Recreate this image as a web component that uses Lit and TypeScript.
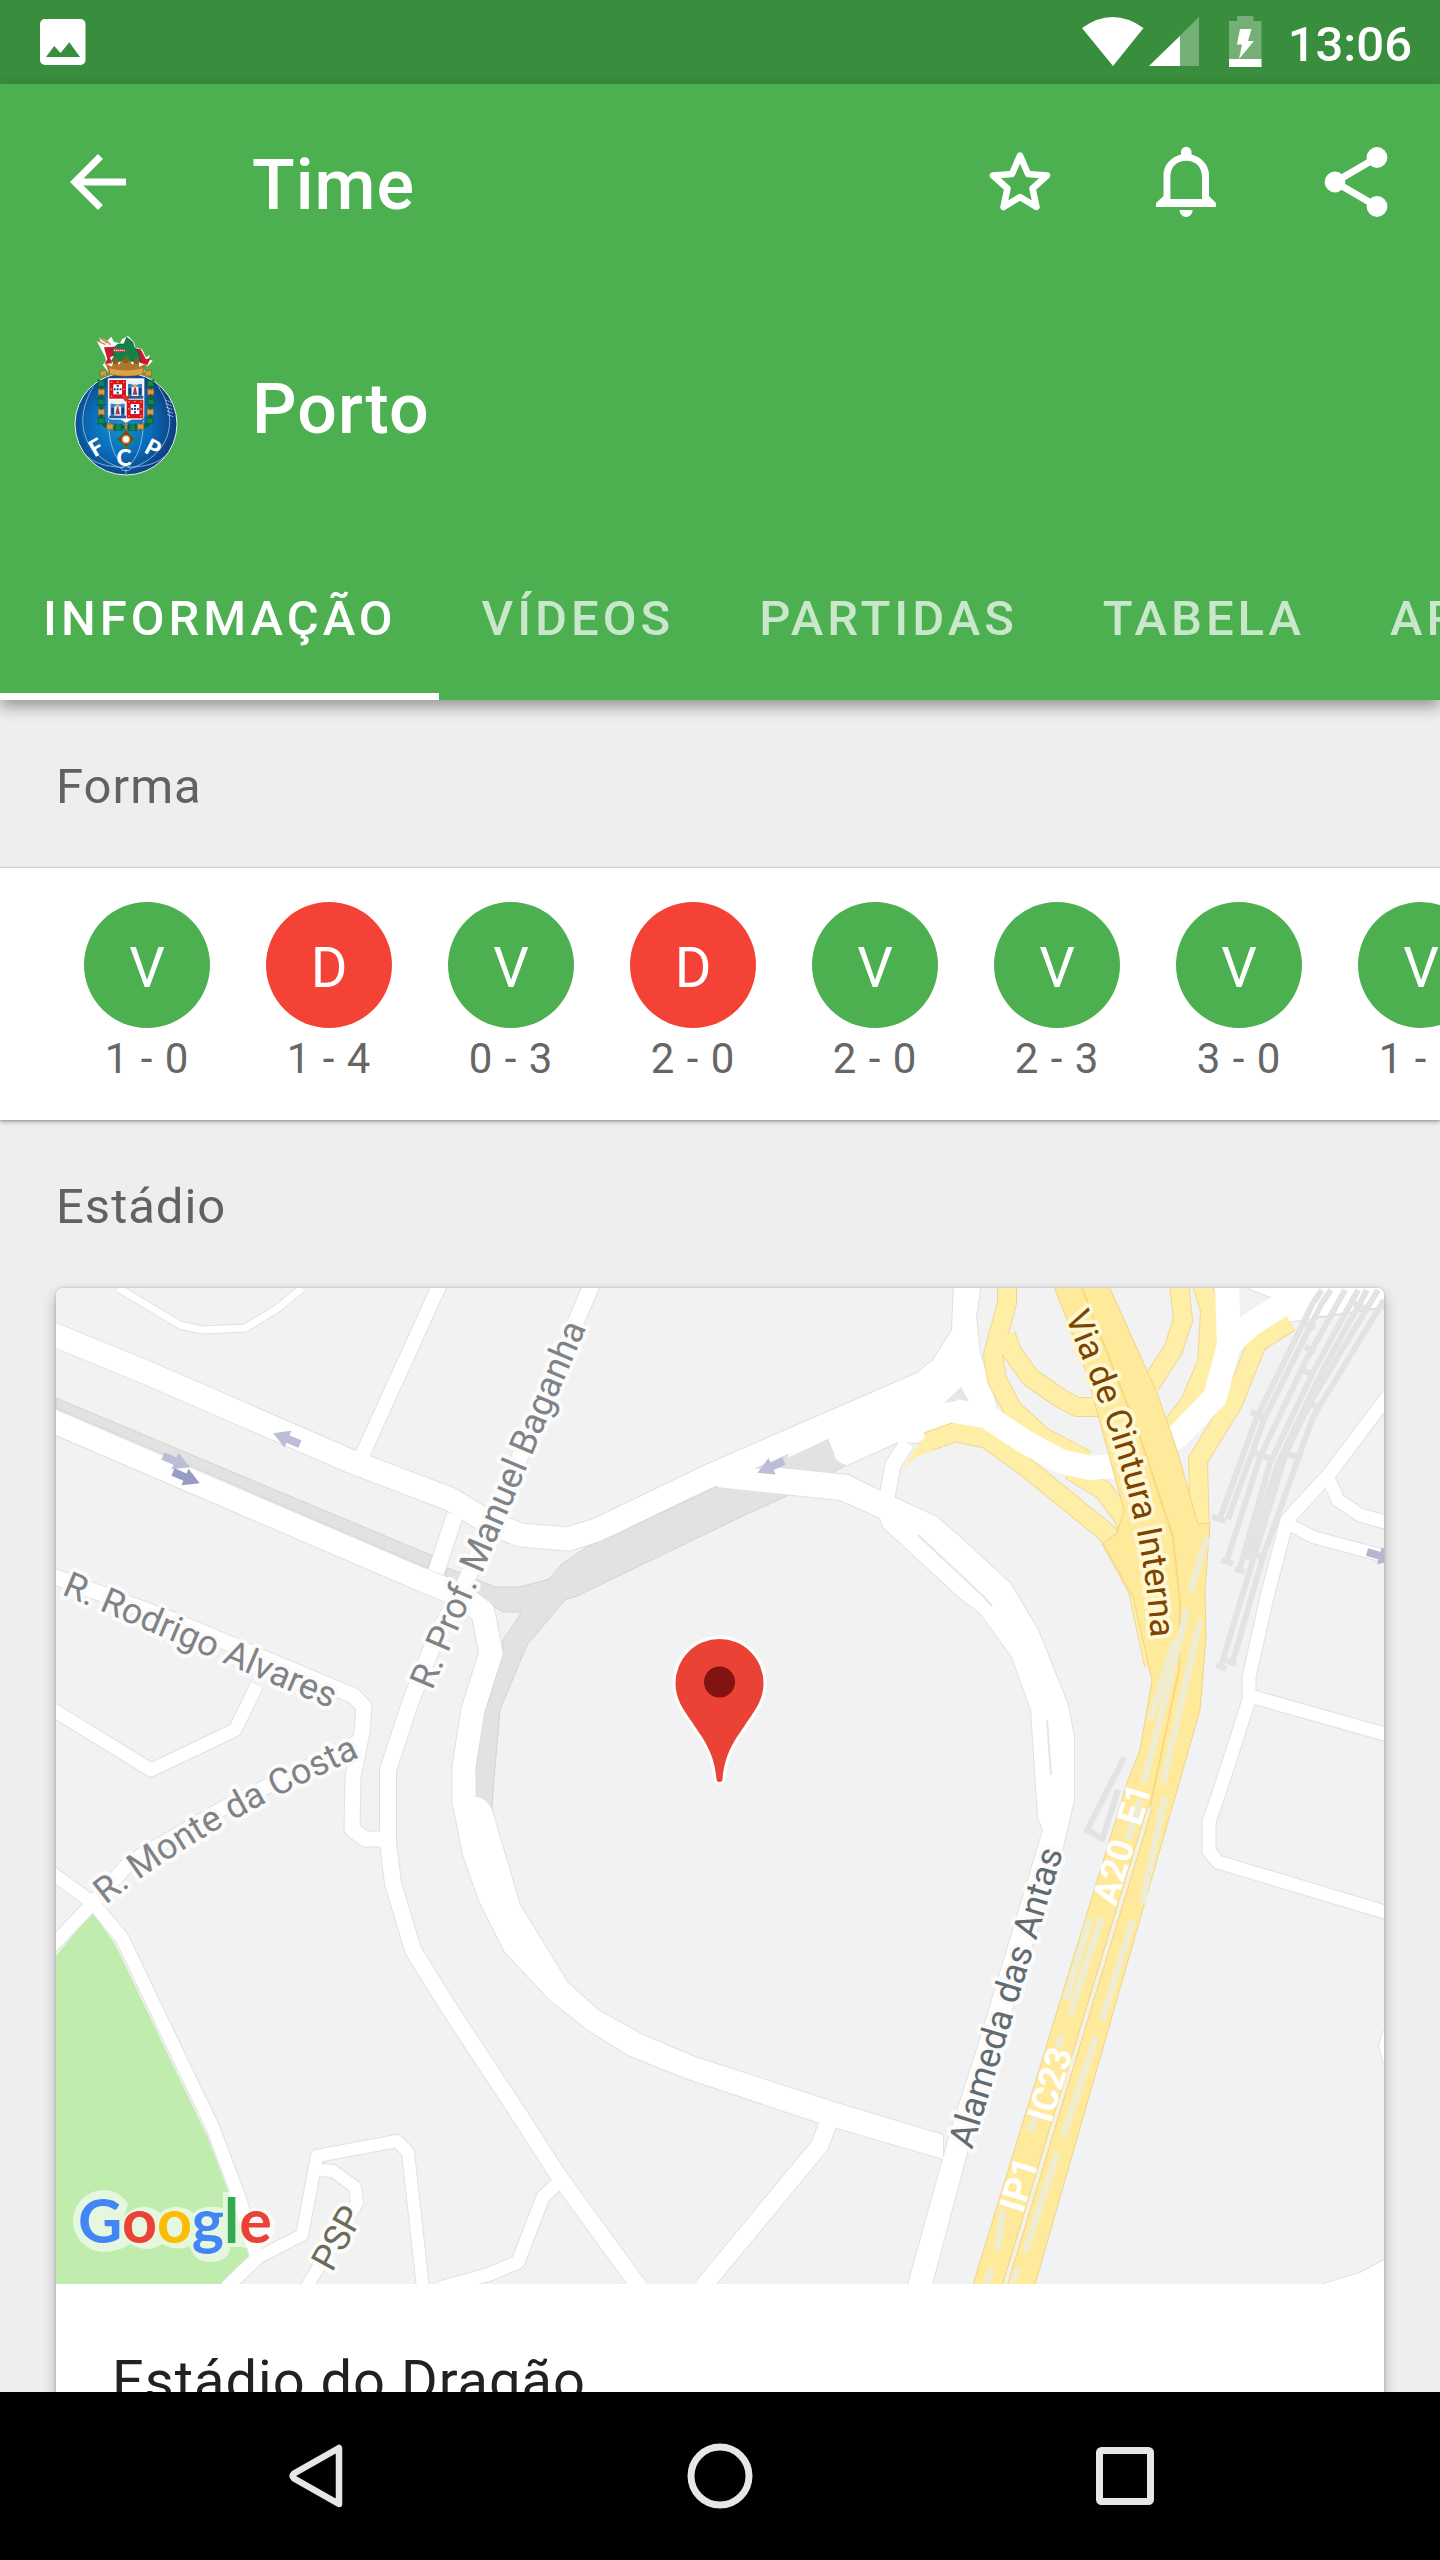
import { LitElement, html, svg, css } from "lit";
import { customElement, state } from "lit/decorators.js";
import { classMap } from "lit/directives/class-map.js";

type Road = { d: string; w: number };

/* Street centre lines, drawn first as a thin grey casing and then in white. */
const streets: Road[] = [
  { d: "M118 1288 L180 1325 L202 1330 L245 1328 L278 1308 L302 1288", w: 7 },
  { d: "M50 1333 L150 1374 L350 1461 L450 1499 L488 1522 L520 1535 L568 1539 L597 1530 L707 1477 L803 1435 L925 1383", w: 23 },
  { d: "M50 1420 L420 1579 L460 1595 L483 1612 L491 1653 L473 1710 L464 1767 L464 1806", w: 23 },
  { d: "M592 1284 L578 1317 L500 1505 L462 1590 L437 1635 L410 1703 L388 1770 L388 1843 L393 1883 L413 1950 L447 2005 L520 2116 L558 2175 L640 2288", w: 16 },
  { d: "M455 1515 L436 1572", w: 16 },
  { d: "M440 1284 L360 1460", w: 14 },
  { d: "M50 1575 L173 1620 L354 1696 L364 1707 L362 1732 L353 1777 L352 1829 L365 1839 L388 1839", w: 15 },
  { d: "M50 1708 L151 1770 L235 1730 L257 1685", w: 13 },
  { d: "M93 1903 L130 1862 L227 1806 L362 1740", w: 14 },
  { d: "M50 1872 L93 1903 L122 1938 L213 2128 L240 2200 L257 2258 L226 2288", w: 13 },
  { d: "M93 1903 L50 1948", w: 13 },
  { d: "M257 2258 L302 2235 L317 2156 L397 2141 L408 2152 L423 2288", w: 12 },
  { d: "M320 2170 L333 2171 L355 2187 L357 2203 L306 2288", w: 12 },
  { d: "M559 2182 L543 2197 L518 2262 L490 2274 L440 2288", w: 13 },
  { d: "M828 2123 L820 2145 L702 2288", w: 17 },
  { d: "M887 1497 L893 1465 L907 1443", w: 15 },
  { d: "M1388 1396 L1330 1473 L1287 1520 L1267 1597 L1249 1677 L1249 1700 L1220 1790 L1209 1822 L1209 1851 L1218 1862 L1388 1913", w: 13 },
  { d: "M1328 1478 L1338 1500 L1360 1515 L1388 1523", w: 13 },
  { d: "M1290 1525 L1313 1537 L1388 1557", w: 12 },
  { d: "M1250 1696 L1388 1735", w: 13 },
];

/* Carriageways whose two edges are not parallel. */
const areas = [
  "M803 1423 L917 1373 L933 1360 L952 1330 L954 1284 L981 1284 L976 1317 L980 1353 L997 1407 L990 1425 L953 1425 L917 1443 L898 1442 L847 1465 Q835 1463 834 1453 L828 1439 L787 1458Z",
  "M453 1804 L463 1855 L480 1903 L505 1952 L550 2000 L588 2030 L628 2055 L685 2078 L820 2123 L943 2159 L943 2135 L837 2103 L695 2057 L643 2035 L598 2010 L568 1983 L520 1905 L500 1838 L492 1810 Q486 1797 476 1797 L453 1797Z",
  "M717 1470 L780 1468 L848 1475 L893 1497 L937 1517 L960 1537 L1010 1583 L1038 1630 L1068 1705 L1074 1737 L1074 1800 L1063 1847 L967 2153 L931 2288 L907 2288 L943 2159 L950 2133 L980 2040 L1043 1830 L1038 1817 L1031 1710 L1012 1657 L980 1613 L960 1598 L883 1527 L880 1518 L840 1500 L717 1487Z",
  "M1238 1325 L1273 1298 L1248 1288 L1248 1284 L1388 1284 L1388 1307 L1313 1318 L1287 1322 L1253 1343Z",
  "M1323 2284 L1360 2273 L1384 2260 L1384 2284Z",
  "M1384 2030 L1379 2045 L1384 2065Z",
];

const tunnels = [
  "M56 1398 L433 1556 L428 1568 L56 1408Z",
  "M717 1487 L770 1462 L828 1439 L834 1453 L845 1466 L789 1495 L745 1515 L577 1596 L565 1600 L527 1645 L500 1710 L493 1790 L492 1812 L470 1806 L476 1767 L483 1718 L502 1657 L503 1640 L522 1612 L503 1612 L480 1598 L445 1575 L448 1568 L495 1587 L520 1587 L549 1579 L562 1564 L585 1548Z",
];

const ramps = [
  "M1007 1284 L1007 1303 L993 1355 L997 1380 L1013 1410 L1043 1437 L1087 1460",
  "M1006 1335 L1012 1352 L1030 1377 L1060 1398 L1077 1407 L1112 1407",
  "M927 1442 L955 1432 L987 1439 L1027 1468 L1107 1533 L1138 1590 L1154 1665",
  "M1070 1470 L1103 1490 L1124 1518 L1136 1560",
  "M1179 1284 L1183 1320 L1173 1350 L1150 1385",
  "M1202 1284 L1210 1310 L1207 1363 L1190 1403 L1165 1435",
  "M1290 1322 L1257 1343 L1233 1403 L1198 1460 L1200 1540",
];

const highway =
  "M1053 1284 L1067 1320 L1087 1375 L1113 1470 L1124 1510 L1117 1533 L1103 1543 L1133 1597 L1152 1680 L1140 1750 L1128 1780 L972 2288 L1034 2288 L1180 1780 L1200 1710 L1206 1637 L1205 1590 L1210 1523 L1198 1524 L1177 1450 L1157 1393 L1108 1284Z";

const rails = [
  "M1322 1290 L1313 1303 L1257 1417 L1220 1518",
  "M1331 1290 L1322 1303 L1265 1417 L1228 1519",
  "M1345 1290 L1306 1360 L1260 1457 L1227 1560",
  "M1358 1290 L1314 1370 L1270 1463 L1240 1568",
  "M1367 1290 L1323 1370 L1278 1463 L1247 1560",
  "M1378 1290 L1310 1403 L1286 1453 L1253 1560 L1221 1666",
  "M1384 1300 L1313 1417 L1263 1557 L1233 1661",
];

const sleepers = [
  "M1251 1412 l14 6", "M1255 1453 l14 5", "M1212 1517 l14 4", "M1221 1560 l12 4", "M1235 1569 l10 3",
  "M1301 1322 l14 6", "M1305 1347 l10 5", "M1354 1303 l12 6", "M1302 1370 l12 5", "M1305 1402 l12 5",
  "M1250 1553 l16 5", "M1216 1665 l10 4", "M1226 1660 l10 4", "M1284 1453 l14 4",
];

const railOverlay = [
  "M1207 1537 L1190 1593", "M1187 1610 L1144 1783", "M1200 1620 L1163 1783", "M1175 1640 L1150 1720",
  "M1165 1797 L1142 1903", "M1133 1920 L1102 2020", "M1101 1918 L1070 2015", "M1090 1918 L1066 2000",
  "M1096 2037 L1063 2137", "M1057 2153 L1025 2253", "M1003 2210 L997 2250", "M1140 1800 L1128 1840",
  "M1036 2116 L1030 2132", "M1062 2035 L1058 2048", "M992 2268 L986 2284", "M1018 2268 L1012 2284",
];

const mapArrows = [
  { x: 300, y: 1444, r: 202, c: "#bcbdd6" },
  { x: 163, y: 1456, r: 23, c: "#bcbdd6" },
  { x: 173, y: 1472, r: 23, c: "#979cc2" },
  { x: 784, y: 1461, r: 156, c: "#bcbdd6" },
  { x: 1367, y: 1552, r: 16, c: "#b4b6d2" },
];

@customElement("stadium-map")
class StadiumMap extends LitElement {
  static styles = css`
    :host { display: block; }
    .map { display: block; width: 100%; height: auto; background: #f2f2f2; }
    .casing { fill: none; stroke: #e1e1e1; stroke-linejoin: round; }
    .street { fill: none; stroke: #fff; stroke-linejoin: round; }
    .area { fill: #fff; }
    .area-edge { fill: none; stroke: #e1e1e1; stroke-width: 2px; }
    .tunnel { fill: #e2e2e2; stroke: #d3d3d3; stroke-width: 1px; }
    .ramp-edge { fill: none; stroke: #eed795; stroke-width: 20px; stroke-linejoin: round; }
    .ramp { fill: none; stroke: #ffefa6; stroke-width: 18px; stroke-linejoin: round; }
    .label { font-family: Roboto, sans-serif; font-size: 36px; fill: #808386; stroke: #fbfbfb; stroke-width: 8px; stroke-linejoin: round; paint-order: stroke; }
    .label.dark { fill: #616b70; }
    .label.olive { fill: #6c6c58; }
    .label.brown { fill: #7b4400; stroke: #fff6d2; font-size: 35px; }
    .shield { font-family: Roboto, sans-serif; font-size: 36px; font-weight: 700; fill: #fff; }
    .brand { font-family: Lato, sans-serif; font-size: 61px; font-weight: 700; }
    .halo { fill: #fff; opacity: 0.6; }
    .rail { fill: none; stroke: #e1e3e5; stroke-width: 6px; }
    .over { fill: none; stroke: #efecd0; stroke-width: 7px; }
  `;

  render() {
    return html`
      <svg class="map" viewBox="56 1288 1328 996" role="img" aria-label="Mapa do estádio">
        <path d="M1210 1520 L1274 1560 L1206 1790 L1052 2284 L950 2284 L1070 1850 L1150 1680Z" fill="#f0f2f4"/>
        <path d="M56 1956 L92 1912 L115 1944 L208 2138 L228 2191 L253 2260 L232 2284 L56 2284Z" fill="#c0ecae"/>
        ${areas.map((d) => svg`<path class="area-edge" d=${d}/>`)}
        ${streets.map((s) => svg`<path class="casing" stroke-width=${s.w + 2} d=${s.d}/>`)}
        ${tunnels.map((d) => svg`<path class="tunnel" d=${d}/>`)}
        ${streets.map((s) => svg`<path class="street" stroke-width=${s.w} d=${s.d}/>`)}
        ${areas.map((d) => svg`<path class="area" d=${d}/>`)}
        <path d="M944 1403 L961 1387 L970 1403 L957 1401Z" fill="#e6e6e6"/>
        <path d="M918 1535 L984 1597 L992 1606 M1047 1720 L1051 1775" fill="none" stroke="#e6e6e6" stroke-width="2"/>
        <path d="M1313 1318 L1384 1307" stroke="#d5d5d5" stroke-width="1"/>
        ${ramps.map((d) => svg`<path class="ramp-edge" d=${d}/>`)}
        ${ramps.map((d) => svg`<path class="ramp" d=${d}/>`)}
        <path d="M902 1470 L918 1445 L930 1432 L934 1450 L918 1456Z" fill="#ffefa6"/>
        <path d="M955 1411 L987 1417 L1027 1443 L1060 1461 L1090 1468 L1127 1465 L1177 1437 L1215 1397 L1229 1345 L1227 1284 M1229 1345 L1250 1325 L1280 1306"
          fill="none" stroke="#fff" stroke-width="24" stroke-linejoin="round"/>
        <path d=${highway} fill="#ffe99b" stroke="#f0d488" stroke-width="1"/>
        <path d="M1082 1288 L1140 1437 L1173 1537 L1180 1603 L1179 1670 L1150 1807" fill="none" stroke="#f8d981" stroke-width="2"/>
        <path d="M1150 1807 L1118 1912 L1004 2288" fill="none" stroke="#f0d488" stroke-width="6"/>
        <path d="M1150 1807 L1118 1912 L1004 2288" fill="none" stroke="#f4f1e0" stroke-width="4"/>
        ${rails.map((d) => svg`<path class="rail" d=${d}/>`)}
        ${sleepers.map((d) => svg`<path class="rail" d=${d}/>`)}
        <path class="rail" d="M1124 1758 L1087 1830 M1118 1790 L1102 1840 M1085 1829 l20 11"/>
        ${railOverlay.map((d) => svg`<path class="over" d=${d}/>`)}
        ${mapArrows.map(
          (a) => svg`<path d="M0 -4 H13 V-9 L29 0 L13 9 V4 H0Z" fill=${a.c} transform="translate(${a.x} ${a.y}) rotate(${a.r})"/>`,
        )}
        <path id="monte" d="M106 1905 Q196 1831 366 1754" fill="none"/>
        <path id="cintura" d="M1065 1316 C1087 1374 1150 1500 1152 1670" fill="none"/>
        <text class="label" transform="translate(432 1691) rotate(-67)">R. Prof. Manuel Baganha</text>
        <text class="label" transform="translate(61 1594) rotate(23)">R. Rodrigo Alvares</text>
        <text class="label"><textPath href="#monte">R. Monte da Costa</textPath></text>
        <text class="label dark" transform="translate(972 2150) rotate(-73)">Alameda das Antas</text>
        <text class="label olive" transform="translate(332 2273) rotate(-61)">PSP</text>
        <text class="label brown"><textPath href="#cintura">Via de Cintura Interna</textPath></text>
        <text class="shield" transform="translate(1116 1907) rotate(-73)">A20&nbsp; E1</text>
        <text class="shield" transform="translate(1051 2124) rotate(-73)">IC23</text>
        <text class="shield" transform="translate(1023 2214) rotate(-73)">IP1</text>
        <path d="M719.5 1639 A44 44 0 0 1 763.500 1683 C763.500 1698 757 1708 747 1722 C736 1739 725 1751 722.500 1779 A3 3 0 0 1 716.500 1779 C714 1751 703 1739 692 1722 C682 1708 675.500 1698 675.500 1683 A44 44 0 0 1 719.500 1639Z"
          fill="#ea4335" stroke="#fff" stroke-width="6" paint-order="stroke"/>
        <circle cx="719.500" cy="1682" r="15.500" fill="#811411"/>
        <path class="halo" d="M104 2190 A29 29 0 0 1 128 2204 L124 2216 Q133 2206 146 2207 Q155 2208 160 2213 Q167 2206 178 2207 Q188 2208 193 2213 Q203 2204 223 2208 V2192 H243 V2212 Q254 2204 266 2210 Q278 2218 274 2234 Q268 2250 252 2249 L240 2247 H230 Q229 2262 210 2262 Q194 2262 190 2246 Q178 2252 162 2244 Q148 2254 130 2244 Q118 2252 104 2252 A31 31 0 0 1 104 2190Z"/>
        <text class="brand" x="78" y="2243"><tspan fill="#4285f4">G</tspan><tspan fill="#ea4335">o</tspan><tspan fill="#fbbc05">o</tspan><tspan fill="#4285f4">g</tspan><tspan fill="#34a853">l</tspan><tspan fill="#ea4335">e</tspan></text>
      </svg>
    `;
  }
}

@customElement("club-crest")
class ClubCrest extends LitElement {
  static styles = css`
    :host { display: block; width: 140px; height: 140px; }
    .crest { display: block; width: 100%; height: 100%; }
    .letter { font-family: Lato, sans-serif; font-weight: 900; font-size: 68px; fill: #fff; text-anchor: middle; }
  `;

  /* Quarter of the shield with the five small blue escutcheons. */
  private quinas(x: number, y: number) {
    return svg`<g transform="translate(${x} ${y})">
      <rect width="50" height="56" fill="#d8121f"/>
      <rect x="12" y="13" width="26" height="30" fill="#fff"/>
      <path d="M22 15h6v6h-6z M22 25h6v6h-6z M22 35h6v6h-6z M14 25h5v6h-5z M31 25h5v6h-5z" fill="#173c86"/>
      <path d="M5 5h4v4h-4z M41 5h4v4h-4z M5 47h4v4h-4z M41 47h4v4h-4z M23 4h4v4h-4z M4 26h4v4h-4z M42 26h4v4h-4z" fill="#f1b53c"/>
    </g>`;
  }

  private towers(x: number, y: number) {
    return svg`<g transform="translate(${x} ${y})">
      <rect width="50" height="56" fill="#e9f2fa"/>
      <path d="M4 12h11v38H4z M35 12h11v38H35z M15 20h20v-6H15z" fill="#3a80bd"/>
      <path d="M6 24h7v20H6z M37 24h7v20h-7z" fill="#183d78"/>
      <path d="M25 14l7 30H18z" fill="#9c3c48"/><circle cx="25" cy="18" r="5" fill="#e5a56c"/>
      <path d="M0 48h50v8H0z" fill="#235a9c"/>
    </g>`;
  }

  render() {
    const chain = [
      [154, 216], [154, 276], [180, 320], [302, 216], [301, 276], [272, 320], [160, 160], [295, 160],
    ];
    const leaves = [
      [154, 190], [153, 245], [154, 302], [205, 322], [247, 322], [300, 302], [303, 245], [301, 190],
    ];
    return html`
      <svg class="crest" viewBox="18 48 420 420" role="img" aria-label="FC Porto">
        <defs>
          <radialGradient id="ball" cx="45%" cy="50%" r="55%">
            <stop offset="0" stop-color="#1592d6"/><stop offset="0.550" stop-color="#0a6cb8"/><stop offset="1" stop-color="#0c3b7c"/>
          </radialGradient>
        </defs>
        <circle cx="228" cy="312" r="153" fill="url(#ball)" stroke="#e8f1f8" stroke-width="3"/>
        <g fill="none" stroke="#bcdcf2" stroke-width="2">
          <path d="M130 200 C75 290 85 400 215 445 M325 200 C385 290 370 400 243 445"/>
          <path d="M176 300 C175 370 195 415 222 440 M280 300 C280 370 262 415 234 440"/>
          <path d="M112 410 C150 440 190 440 222 442 M344 410 C306 440 266 440 234 442 M228 448v16"/>
          <ellipse cx="228" cy="446" rx="14" ry="6"/>
        </g>
        <path d="M346 240l18 7 M347 251l20 7 M349 262l20 7 M351 273l20 7 M352 284l18 6" stroke="#fff" stroke-width="2" stroke-dasharray="5 2"/>
        <path d="M154 185 V290 Q155 322 190 322 H266 Q301 322 302 290 V185" fill="none" stroke="#0d6440" stroke-width="12"/>
        ${leaves.map(([x, y]) => svg`<path d="M${x - 11} ${y - 11} l11 5 11 -5 -3 11 4 11 -12 -3 -12 3 4 -11Z" fill="#138a4b" stroke="#0b4f36" stroke-width="2"/>`)}
        ${chain.map(([x, y]) => svg`<path d="M${x - 8} ${y - 10} l8 3 8 -3 2 10 -2 10 -8 -3 -8 3 -2 -10Z" fill="#d99a42" stroke="#8c5a20" stroke-width="2"/>`)}
        <path d="M166 112 L140 62 L152 66 L148 52 L170 64 L184 50 L192 66 L210 70 L216 58 L234 48 L252 66 L256 82 L276 88 L288 112 L300 104 L296 118 L308 122 L294 138 L280 134 L284 156 L174 156 L158 134 L168 124Z" fill="#fff"/>
        <path d="M162 82 L194 80 L215 98 L180 112 L186 130 L164 132 L172 118Z M250 84 L272 88 L288 118 L302 114 L292 136 L270 128Z" fill="#cf172d"/>
        <path d="M184 90 L204 72 L222 72 L230 52 L248 66 L252 80 L266 96 L272 124 H184 L194 106Z" fill="#158148" stroke="#0b4b2d" stroke-width="2"/>
        <path d="M188 84 L226 90 L230 96 L192 96Z" fill="#e2344a"/><path d="M192 91h32" stroke="#fff" stroke-width="3" stroke-dasharray="4 2"/>
        <path d="M142 62 L166 74 M150 54 L172 70 M164 56 L182 74" stroke="#c88c46" stroke-width="4"/>
        <path d="M166 130 L186 140 L192 112 L206 134 L228 108 L248 134 L264 112 L268 140 L290 130 L278 164 Q228 174 178 164Z" fill="#ae7627"/>
        <path d="M178 145 Q228 158 279 145 L276 162 Q228 172 181 162Z" fill="#dfa04a"/>
        <circle cx="197" cy="124" r="9" fill="#875e22"/><circle cx="228" cy="121" r="9" fill="#875e22"/><circle cx="259" cy="124" r="9" fill="#875e22"/>
        <path d="M173 174 H284 V288 Q284 300 270 300 H244 L228 310 L212 300 H187 Q173 300 173 288Z" fill="#fff" stroke="#32547c" stroke-width="2"/>
        ${this.quinas(178, 180)} ${this.towers(230, 180)} ${this.towers(178, 239)} ${this.quinas(230, 239)}
        <path d="M220 230 q8 -6 16 0 q4 8 -8 15 q-12 -7 -8 -15Z" fill="#d1382b"/>
        <path d="M228 310 V334" stroke="#bf8235" stroke-width="8"/>
        <path d="M228 328 L240 344 L256 358 L240 370 L228 386 L216 370 L200 358 L216 344Z" fill="#8c3a27" stroke="#159056" stroke-width="4"/>
        <circle cx="228" cy="358" r="11" fill="#fff" stroke="#d59949" stroke-width="4"/>
        <text class="letter" transform="translate(150 403) rotate(-30)">F</text>
        <text class="letter" transform="translate(222 438)">C</text>
        <text class="letter" transform="translate(298 406) rotate(27)">P</text>
      </svg>
    `;
  }
}

@customElement("app-root")
class AppRoot extends LitElement {
  static styles = css`
    :host { display: flex; flex-direction: column; height: 100vh; background: #eee; font-family: Roboto, sans-serif; overflow: hidden; }
    button { border: 0; margin: 0; padding: 0; background: none; font: inherit; color: inherit; cursor: pointer; }
    svg { display: block; }

    .status { flex: none; display: flex; align-items: center; justify-content: space-between; height: 84px; padding: 0 28px; background: #388e3c; color: #fff; }
    .status-right { display: flex; align-items: center; }
    .clock { padding: 6px 0 0 26px; font-size: 49px; line-height: 60px; font-weight: 500; }

    .header { flex: none; position: relative; z-index: 1; background: #4caf50; color: #fff; box-shadow: 0 7px 14px rgba(0, 0, 0, 0.36); }
    .toolbar { display: flex; align-items: center; height: 196px; }
    .back { padding: 56px; }
    .heading { margin: 0; padding-top: 6px; font-size: 70px; line-height: 84px; font-weight: 500; letter-spacing: 1px; }
    .toolbar .heading { flex: 1; padding-left: 56px; }
    .action { display: grid; place-items: center; width: 168px; height: 168px; }
    .team { display: flex; align-items: center; gap: 56px; height: 252px; padding: 0 56px; }
    .tabs { display: flex; overflow: hidden; }
    .tab { flex: none; height: 168px; padding: 4px 42px 0 43px; font-size: 49px; font-weight: 500; letter-spacing: 4px; color: rgba(255, 255, 255, 0.7); white-space: nowrap; }
    .tab.active { color: #fff; box-shadow: inset 0 -7px 0 #fff; }

    .content { flex: 1; min-height: 0; overflow: hidden; }
    .section { margin: 0; padding: 58px 56px 52px; font-size: 49px; line-height: 58px; font-weight: 400; letter-spacing: 1px; color: #616161; }
    .form { display: flex; gap: 56px; margin: 0; padding: 34px 84px 36px; list-style: none; overflow: hidden; background: #fff; box-shadow: 0 0 2px rgba(0, 0, 0, 0.25), 0 2px 4px rgba(0, 0, 0, 0.3); }
    .match { flex: none; display: flex; flex-direction: column; align-items: center; gap: 6px; width: 126px; }
    .result { box-sizing: border-box; width: 126px; height: 126px; padding-top: 6px; border-radius: 50%; background: #4caf50; color: #fff; font-size: 56px; line-height: 120px; text-align: center; }
    .result.loss { background: #f44336; }
    .score { font-size: 42px; line-height: 50px; letter-spacing: 1px; color: #666; white-space: nowrap; }
    .card { margin: 0 56px 56px; background: #fff; border-radius: 7px; box-shadow: 0 0 3px rgba(0, 0, 0, 0.2), 0 6px 14px rgba(0, 0, 0, 0.28); }
    .map { overflow: hidden; border-radius: 7px 7px 0 0; }
    .stadium { margin: 0; padding: 64px 56px; font-size: 56px; line-height: 66px; font-weight: 400; letter-spacing: 1px; color: #212121; }

    .system { flex: none; position: relative; z-index: 1; display: flex; justify-content: center; height: 168px; background: #000; }
    .key { display: grid; place-items: center; width: 405px; height: 168px; }
  `;

  @state() private tab = 0;

  private tabs = ["INFORMAÇÃO", "VÍDEOS", "PARTIDAS", "TABELA", "ARTILHEIROS"];

  private matches = [
    ["V", "1 - 0"], ["D", "1 - 4"], ["V", "0 - 3"], ["D", "2 - 0"],
    ["V", "2 - 0"], ["V", "2 - 3"], ["V", "3 - 0"], ["V", "1 - 0"],
  ];

  render() {
    return html`
      <div class="status">
        <svg width="70" height="84" viewBox="28 0 70 84" aria-hidden="true">
          <path fill-rule="evenodd" fill="#fff" d="M45 19h35.500a5 5 0 0 1 5 5v36a5 5 0 0 1-5 5H45a5 5 0 0 1-5-5V24a5 5 0 0 1 5-5z M46 57H80L69.300 42.300 60.600 53 54.200 46z"/>
        </svg>
        <div class="status-right">
          <svg width="184" height="84" viewBox="1078 0 184 84" aria-hidden="true">
            <path d="M1082 28 Q1112.500 6 1143.500 28 L1113 66Z" fill="#fff"/>
            <path d="M1149 66 L1199 17 V66Z" fill="#fff" opacity="0.300"/>
            <path d="M1149 66 L1180 36 V66Z" fill="#fff"/>
            <path d="M1229 21 H1237 V16 H1253.500 V21 H1261.500 V60 H1229Z" fill="#fff" opacity="0.300"/>
            <path d="M1229 59 H1261.500 V67 H1229Z M1240 29 H1251.500 L1248 41 H1254 L1239 59 L1242 44.500 H1237Z" fill="#fff"/>
          </svg>
          <time class="clock">13:06</time>
        </div>
      </div>

      <header class="header">
        <div class="toolbar">
          <button class="back" aria-label="Voltar">
            <svg width="84" height="84" viewBox="0 0 24 24" fill="#fff"><path d="M20 11H7.830l5.590-5.590L12 4l-8 8 8 8 1.410-1.410L7.830 13H20v-2z"/></svg>
          </button>
          <h1 class="heading">Time</h1>
          <button class="action" aria-label="Favoritar">
            <svg width="84" height="84" viewBox="0 0 84 84" fill="none" stroke="#fff" stroke-width="6.500" stroke-linejoin="round">
              <path d="M42 15.500 L50 34 L69 35.500 L54.500 48.500 L58.500 67 L42 57 L25.500 67 L29.500 48.500 L15 35.500 L34 34Z"/>
            </svg>
          </button>
          <button class="action" aria-label="Notificações">
            <svg width="84" height="84" viewBox="0 0 84 84" fill="#fff">
              <path fill-rule="evenodd" d="M17.500 56 V35 C17.500 25 25 17 35 14.500 V12 a5.200 5.200 0 0 1 10.500 0 V14.500 C55.500 17 63 25 63 35 V56 l7 7 v4 H10 v-4z M24.400 59 H56 V37 C56 27 50 20.700 40.200 20.700 C30.400 20.700 24.400 27 24.400 37z"/>
              <path d="M33.600 70h13c0 4-3 7-6.500 7s-6.500-3-6.500-7z"/>
            </svg>
          </button>
          <button class="action" aria-label="Compartilhar">
            <svg width="84" height="84" viewBox="0 0 84 84" fill="#fff">
              <path d="M63 17.500 L21 42 L63 66.500" fill="none" stroke="#fff" stroke-width="7"/>
              <circle cx="63" cy="17.500" r="10.400"/><circle cx="21" cy="42" r="10.400"/><circle cx="63" cy="66.500" r="10.400"/>
            </svg>
          </button>
        </div>
        <div class="team">
          <club-crest></club-crest>
          <h2 class="heading">Porto</h2>
        </div>
        <nav class="tabs" role="tablist">
          ${this.tabs.map(
            (name, i) => html`<button class=${classMap({ tab: true, active: i === this.tab })} role="tab"
              aria-selected=${i === this.tab ? "true" : "false"} @click=${() => (this.tab = i)}>${name}</button>`,
          )}
        </nav>
      </header>

      <main class="content">
        <h3 class="section">Forma</h3>
        <ul class="form">
          ${this.matches.map(
            ([result, score]) => html`<li class="match">
              <span class=${classMap({ result: true, loss: result === "D" })}>${result}</span>
              <span class="score">${score}</span>
            </li>`,
          )}
        </ul>
        <h3 class="section">Estádio</h3>
        <article class="card">
          <div class="map"><stadium-map></stadium-map></div>
          <h4 class="stadium">Estádio do Dragão</h4>
        </article>
      </main>

      <nav class="system" aria-label="Sistema">
        <button class="key" aria-label="Voltar">
          <svg width="84" height="84" viewBox="0 0 84 84" fill="none" stroke="#e6e6e6" stroke-width="6.500" stroke-linejoin="round">
            <path d="M21 39.500 L66 14 V70 L21 44.500 Q18.500 42 21 39.500Z"/>
          </svg>
        </button>
        <button class="key" aria-label="Início">
          <svg width="84" height="84" viewBox="0 0 84 84" fill="none" stroke="#e6e6e6" stroke-width="7"><circle cx="42" cy="42" r="29"/></svg>
        </button>
        <button class="key" aria-label="Recentes">
          <svg width="84" height="84" viewBox="0 0 84 84" fill="none" stroke="#e6e6e6" stroke-width="7"><rect x="16.500" y="16.500" width="51" height="51" rx="2"/></svg>
        </button>
      </nav>
    `;
  }
}
